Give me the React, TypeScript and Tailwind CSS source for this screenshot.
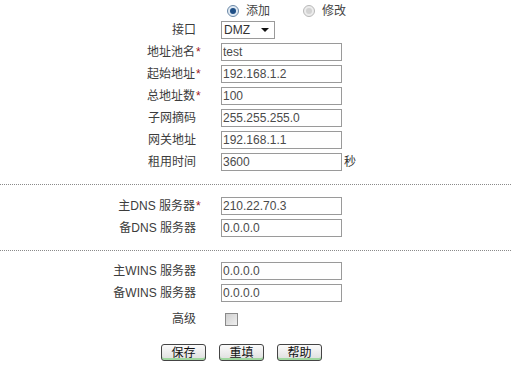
import React, { useState } from 'react';

const font = { fontFamily: '"Liberation Sans", "Noto Sans CJK SC", sans-serif' };

interface RowProps {
  label: string;
  required?: boolean;
  children: React.ReactNode;
}

const Row: React.FC<RowProps> = ({ label, required, children }) => (
  <div className="flex items-center h-[18px]">
    <div className="w-[196px] text-right text-[12px] leading-[18px] text-[#3c3c3c] whitespace-nowrap">
      {label}
      {required && <span className="inline-block w-0 overflow-visible text-left text-[#a01818] pl-[1px]">*</span>}
    </div>
    <div className="ml-[25px] flex items-center">{children}</div>
  </div>
);

const TextBox: React.FC<{ value: string; onChange: (v: string) => void }> = ({ value, onChange }) => (
  <input
    type="text"
    value={value}
    onChange={(e) => onChange(e.target.value)}
    className="block w-[121px] h-[18px] px-[1px] border border-[#9a9a9a] bg-white text-[12px] text-[#4a4a4a] outline-none"
    style={font}
  />
);

const Radio: React.FC<{ checked: boolean; onClick: () => void; label: string }> = ({ checked, onClick, label }) => (
  <button type="button" onClick={onClick} className="flex items-center gap-[7px] text-[12px] text-[#444]">
    <span
      className={`w-[12px] h-[12px] rounded-full border flex items-center justify-center ${
        checked ? 'border-[#6d8aa8] bg-[#dfe9f3]' : 'border-[#b8b8b8] bg-[#ececec]'
      }`}
    >
      <span className={`w-[6px] h-[6px] rounded-full ${checked ? 'bg-[#1f4f86]' : 'bg-[#d2d2d2]'}`} />
    </span>
    {label}
  </button>
);

const Btn: React.FC<{ label: string }> = ({ label }) => (
  <button
    type="button"
    className="w-[45px] h-[17px] rounded-[3px] border border-[#444] bg-gradient-to-b from-[#fbfbfb] to-[#dedede] shadow-[inset_0_-2px_0_#9fd79f] text-[12px] leading-[14px] text-[#111]"
  >
    {label}
  </button>
);

const Divider = () => <div className="w-full border-t border-dotted border-[#8a8a8a]" />;

export default function App() {
  const [mode, setMode] = useState<'add' | 'edit'>('add');
  const [form, setForm] = useState({
    name: 'test',
    start: '192.168.1.2',
    total: '100',
    mask: '255.255.255.0',
    gateway: '192.168.1.1',
    lease: '3600',
    dns1: '210.22.70.3',
    dns2: '0.0.0.0',
    wins1: '0.0.0.0',
    wins2: '0.0.0.0',
  });
  const [advanced, setAdvanced] = useState(false);

  const set = (k: keyof typeof form) => (v: string) => setForm({ ...form, [k]: v });

  return (
    <div className="w-[511px] h-[372px] bg-white overflow-hidden" style={font}>
      <div className="flex items-center h-[21px] pl-[227px] gap-[33px]">
        <Radio checked={mode === 'add'} onClick={() => setMode('add')} label="添加" />
        <Radio checked={mode === 'edit'} onClick={() => setMode('edit')} label="修改" />
      </div>

      <div className="flex flex-col gap-[4px]">
        <Row label="接口">
          <div className="w-[54px] h-[18px] border border-[#9a9a9a] flex items-center justify-between pl-[2px] pr-[5px] text-[12px] text-[#333]">
            <span>DMZ</span>
            <span className="w-0 h-0 border-l-[4px] border-r-[4px] border-t-[4px] border-l-transparent border-r-transparent border-t-[#111]" />
          </div>
        </Row>
        <Row label="地址池名" required>
          <TextBox value={form.name} onChange={set('name')} />
        </Row>
        <Row label="起始地址" required>
          <TextBox value={form.start} onChange={set('start')} />
        </Row>
        <Row label="总地址数" required>
          <TextBox value={form.total} onChange={set('total')} />
        </Row>
        <Row label="子网摘码">
          <TextBox value={form.mask} onChange={set('mask')} />
        </Row>
        <Row label="网关地址">
          <TextBox value={form.gateway} onChange={set('gateway')} />
        </Row>
        <Row label="租用时间">
          <TextBox value={form.lease} onChange={set('lease')} />
          <span className="ml-[2px] text-[12px] text-[#333]">秒</span>
        </Row>
      </div>

      <div className="mt-[13px]">
        <Divider />
      </div>

      <div className="mt-[12px] flex flex-col gap-[4px]">
        <Row label="主DNS 服务器" required>
          <TextBox value={form.dns1} onChange={set('dns1')} />
        </Row>
        <Row label="备DNS 服务器">
          <TextBox value={form.dns2} onChange={set('dns2')} />
        </Row>
      </div>

      <div className="mt-[13px]">
        <Divider />
      </div>

      <div className="mt-[11px] flex flex-col gap-[4px]">
        <Row label="主WINS 服务器">
          <TextBox value={form.wins1} onChange={set('wins1')} />
        </Row>
        <Row label="备WINS 服务器">
          <TextBox value={form.wins2} onChange={set('wins2')} />
        </Row>
        <div className="mt-[4px]">
          <Row label="高级">
            <button
              type="button"
              onClick={() => setAdvanced(!advanced)}
              className="ml-[4px] w-[13px] h-[13px] border border-[#8a8a8a] bg-gradient-to-br from-[#cfcfcf] to-[#f0f0f0] flex items-center justify-center text-[10px] leading-none text-[#222]"
            >
              {advanced ? '✓' : ''}
            </button>
          </Row>
        </div>
      </div>

      <div className="mt-[16px] flex pl-[161px] gap-[13px]">
        <Btn label="保存" />
        <Btn label="重填" />
        <Btn label="帮助" />
      </div>
    </div>
  );
}
